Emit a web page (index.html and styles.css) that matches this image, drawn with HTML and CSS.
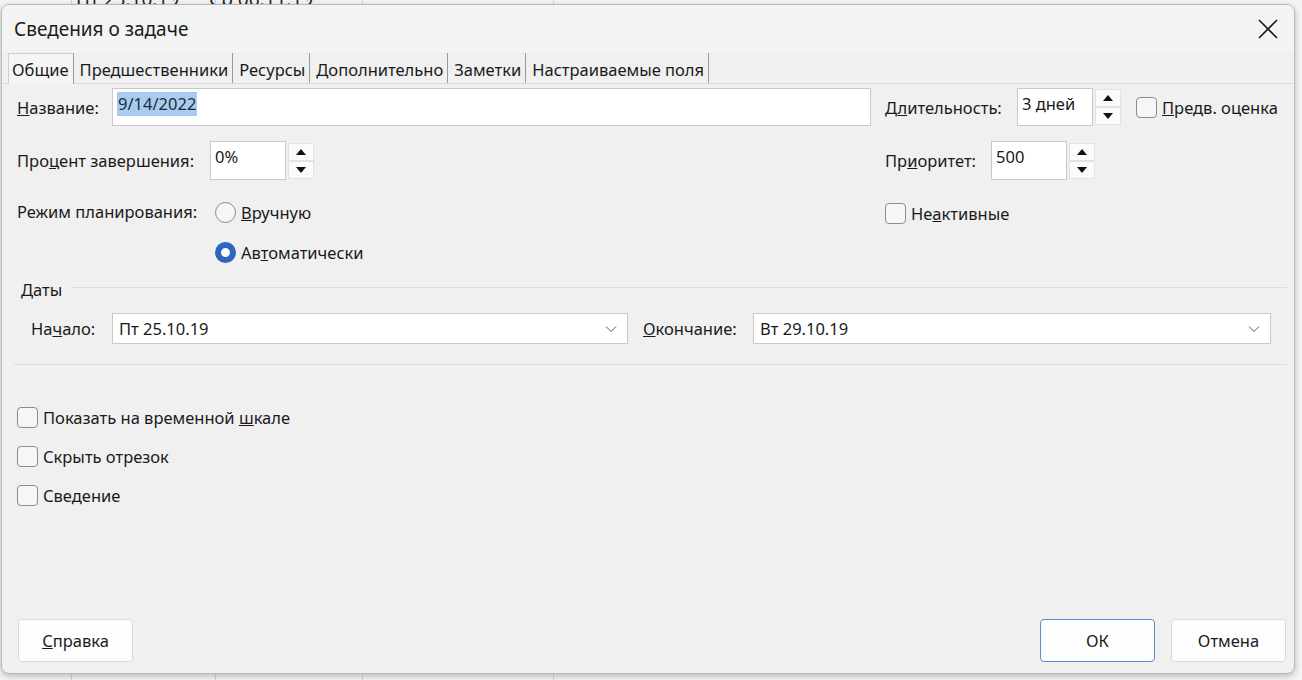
FILE: index.html
```html
<!DOCTYPE html>
<html lang="ru">
<head>
<meta charset="utf-8">
<title>Сведения о задаче</title>
<link rel="stylesheet" href="styles.css">
</head>
<body>
<div class="sheet">
  <div class="sheet-head"><span class="c1">Пт 25.10.19</span><span class="c2">Ср 06.11.19</span></div>
</div>
<div class="dialog">
  <div class="titlebar">
    <span class="title">Сведения о задаче</span>
    <svg class="close" width="20" height="20" viewBox="0 0 20 20"><path d="M1 1 L19 19 M19 1 L1 19" stroke="#1b1b1b" stroke-width="1.6" fill="none"/></svg>
  </div>
  <div class="tabs">
    <div class="tab active">Общие</div>
    <div class="tab">Предшественники</div>
    <div class="tab">Ресурсы</div>
    <div class="tab">Дополнительно</div>
    <div class="tab">Заметки</div>
    <div class="tab">Настраиваемые поля</div>
  </div>
  <div class="panel">
    <div class="row row1">
      <label class="lbl w-name"><u>Н</u>азвание:</label>
      <div class="field name-field"><span class="sel">9/14/2022</span></div>
      <div class="right">
        <label class="lbl w-dur">Д<u>л</u>ительность:</label>
        <div class="field small">3 дней</div>
        <div class="spin">
          <button class="sb"><svg width="10" height="6" viewBox="0 0 10 6"><path d="M0 6 L5 0 L10 6 Z" fill="#111"/></svg></button>
          <button class="sb"><svg width="10" height="6" viewBox="0 0 10 6"><path d="M0 0 L5 6 L10 0 Z" fill="#111"/></svg></button>
        </div>
        <div class="check ml15"><span class="box"></span><span><u>П</u>редв. оценка</span></div>
      </div>
    </div>
    <div class="row row2">
      <div class="left">
        <label class="lbl w-pct">Про<u>ц</u>ент завершения:</label>
        <div class="field small">0%</div>
        <div class="spin">
          <button class="sb"><svg width="10" height="6" viewBox="0 0 10 6"><path d="M0 6 L5 0 L10 6 Z" fill="#111"/></svg></button>
          <button class="sb"><svg width="10" height="6" viewBox="0 0 10 6"><path d="M0 0 L5 6 L10 0 Z" fill="#111"/></svg></button>
        </div>
      </div>
      <div class="right">
        <label class="lbl w-pri">Пр<u>и</u>оритет:</label>
        <div class="field small">500</div>
        <div class="spin">
          <button class="sb"><svg width="10" height="6" viewBox="0 0 10 6"><path d="M0 6 L5 0 L10 6 Z" fill="#111"/></svg></button>
          <button class="sb"><svg width="10" height="6" viewBox="0 0 10 6"><path d="M0 0 L5 6 L10 0 Z" fill="#111"/></svg></button>
        </div>
      </div>
    </div>
    <div class="row row3">
      <div class="left top">
        <label class="lbl w-mode">Режим планирования:</label>
        <div class="radios">
          <div class="radio"><span class="circle"></span><span><u>В</u>ручную</span></div>
          <div class="radio"><span class="circle on"></span><span>Ав<u>т</u>оматически</span></div>
        </div>
      </div>
      <div class="right top">
        <div class="check"><span class="box"></span><span>Не<u>а</u>ктивные</span></div>
      </div>
    </div>
    <div class="group-head"><span>Даты</span><span class="rule"></span></div>
    <div class="dates">
      <label class="lbl w-start">На<u>ч</u>ало:</label>
      <div class="select s-start"><span>Пт 25.10.19</span>
        <svg width="12" height="8" viewBox="0 0 12 8"><path d="M1 1.5 L6 6.5 L11 1.5" stroke="#5a5a5a" stroke-width="1" fill="none"/></svg></div>
      <label class="lbl w-end"><u>О</u>кончание:</label>
      <div class="select s-end"><span>Вт 29.10.19</span>
        <svg width="12" height="8" viewBox="0 0 12 8"><path d="M1 1.5 L6 6.5 L11 1.5" stroke="#5a5a5a" stroke-width="1" fill="none"/></svg></div>
    </div>
    <div class="sep"></div>
    <div class="checks">
      <div class="check"><span class="box"></span><span>Показать на временной <u>ш</u>кале</span></div>
      <div class="check"><span class="box"></span><span>Скрыть отрезок</span></div>
      <div class="check"><span class="box"></span><span>Сведение</span></div>
    </div>
    <div class="footer">
      <button class="btn"><u>С</u>правка</button>
      <div class="btn-group">
        <button class="btn default">ОК</button>
        <button class="btn">Отмена</button>
      </div>
    </div>
  </div>
</div>
</body>
</html>
```

FILE: styles.css
```css
* { box-sizing: border-box; }
html, body { margin: 0; padding: 0; }
body {
  width: 1302px;
  height: 680px;
  overflow: hidden;
  position: relative;
  background-color: #f4f4f4;
  background-image:
    linear-gradient(90deg, transparent 71px, #d4d4d4 71px, #d4d4d4 72px, transparent 72px),
    linear-gradient(90deg, transparent 215px, #d4d4d4 215px, #d4d4d4 216px, transparent 216px),
    linear-gradient(90deg, transparent 362px, #d4d4d4 362px, #d4d4d4 363px, transparent 363px),
    linear-gradient(90deg, transparent 553px, #d4d4d4 553px, #d4d4d4 554px, transparent 554px);
  font-family: "Noto Sans", "Open Sans", sans-serif;
  font-size: 16.5px;
  color: #1a1a1a;
}
.sheet { height: 6px; overflow: hidden; }
.sheet-head {
  margin-top: -14px;
  font-size: 19px;
  color: #222;
  white-space: nowrap;
  display: flex;
}
.sheet-head .c1 { margin-left: 76px; }
.sheet-head .c2 { margin-left: 30px; }

.dialog {
  position: absolute;
  left: 1px;
  top: 4px;
  width: 1294px;
  height: 670px;
  background: #f0f0f0;
  border: 1px solid #b9b9b9;
  border-radius: 8px;
  box-shadow: 0 2px 6px rgba(0,0,0,0.25);
  display: flex;
  flex-direction: column;
  overflow: hidden;
}
.titlebar {
  height: 47px;
  background: #f3f3f3;
  display: flex;
  align-items: center;
  justify-content: space-between;
  padding: 0 16px 0 12px;
  flex: none;
}
.title { font-size: 19px; color: #1b1b1b; padding-top: 1px; }

.tabs {
  height: 31px;
  display: flex;
  align-items: stretch;
  padding-left: 6px;
  border-bottom: 1px solid #dadada;
  flex: none;
  margin-top: 1px;
}
.tab {
  padding: 5px 4px 0 6px;
  border-right: 1px solid #9a9a9a;
  color: #1a1a1a;
  white-space: nowrap;
}
.tab.active {
  background: #f5f5f5;
  border-left: 1px solid #cfcfcf;
  border-top: 1px solid #cfcfcf;
  border-right: 1px solid #9a9a9a;
  padding: 4px 4px 0 3px;
  margin-bottom: -1px;
  height: 31px;
}

.panel {
  flex: 1;
  display: flex;
  flex-direction: column;
  padding: 4px 7px 11px 15px;
}
.row { display: flex; align-items: center; }
.row1 { height: 38px; }
.row2 { height: 39px; margin-top: 15px; justify-content: space-between; }
.row3 { margin-top: 21px; justify-content: space-between; align-items: flex-start; }
.left { display: flex; align-items: center; }
.left.top { align-items: flex-start; }
.right { display: flex; align-items: center; width: 402px; flex: none; }
.row1 .right { margin-left: 14px; }
.right.top { padding-top: 1px; }

.lbl { white-space: nowrap; flex: none; }
.w-name { width: 95px; }
.w-dur { width: 132px; }
.w-pct { width: 193px; }
.w-pri { width: 106px; }
.w-mode { width: 198px; line-height: 22px; }

.field {
  background: #fff;
  border: 1px solid #c9c9c9;
  height: 100%;
  padding: 3px 4px;
  line-height: 24px;
}
.name-field { flex: 1; height: 38px; }
.sel { background: #a9cbef; color: #1d2b3d; padding: 0 1px; display: inline-block; line-height: 24px; }
.field.small { width: 76px; flex: none; }
.row1 .field.small { height: 38px; }
.row2 .field.small { height: 39px; }

.spin { display: flex; flex-direction: column; justify-content: space-between; margin-left: 2px; height: 100%; flex: none; }
.sb {
  width: 26px;
  height: 18px;
  padding: 0;
  margin: 0;
  border: 1px solid #e3e3e3;
  background: #fbfbfb;
  display: flex;
  align-items: center;
  justify-content: center;
}

.check { display: flex; align-items: center; white-space: nowrap; }
.ml15 { margin-left: 15px; }
.box {
  width: 21px; height: 21px;
  border: 1px solid #8c8c8c;
  border-radius: 4px;
  background: #f6f6f6;
  margin-right: 5px;
  flex: none;
}

.radios { display: flex; flex-direction: column; gap: 18px; }
.radio { display: flex; align-items: center; white-space: nowrap; height: 22px; }
.circle {
  width: 21px; height: 21px;
  border-radius: 50%;
  border: 1px solid #8a8a8a;
  background: #f6f6f6;
  margin-right: 5px;
  flex: none;
}
.circle.on {
  border: 6px solid #2f65c1;
  background: #fff;
}

.group-head {
  display: flex; align-items: center;
  margin-top: 15px;
  padding-left: 4px;
  height: 22px;
}
.rule { flex: 1; height: 1px; background: #dcdcdc; margin-left: 9px; margin-top: -4px; }

.dates { display: flex; align-items: center; margin-top: 13px; height: 31px; padding-left: 14px; }
.w-start { width: 81px; }
.w-end { width: 110px; margin-left: 15px; }
.select {
  height: 31px;
  background: #fff;
  border: 1px solid #c9c9c9;
  display: flex; align-items: center; justify-content: space-between;
  padding: 0 10px 0 6px;
  flex: none;
}
.s-start { width: 516px; }
.s-end { width: 518px; }

.sep { height: 1px; background: #dcdcdc; margin-top: 20px; margin-left: -3px; }

.checks { display: flex; flex-direction: column; gap: 18px; margin-top: 42px; }
.checks .check { height: 21px; }

.footer { margin-top: auto; display: flex; justify-content: space-between; align-items: center; padding-left: 1px; }
.btn-group { display: flex; gap: 16px; padding-right: 1px; }
.btn {
  width: 115px;
  height: 43px;
  background: #fdfdfd;
  border: 1px solid #dadada;
  border-radius: 4px;
  font-family: "Noto Sans", "Open Sans", sans-serif;
  font-size: 16.5px;
  color: #1a1a1a;
  padding: 0;
}
.btn.default { border-color: #5a8fd6; }
```
